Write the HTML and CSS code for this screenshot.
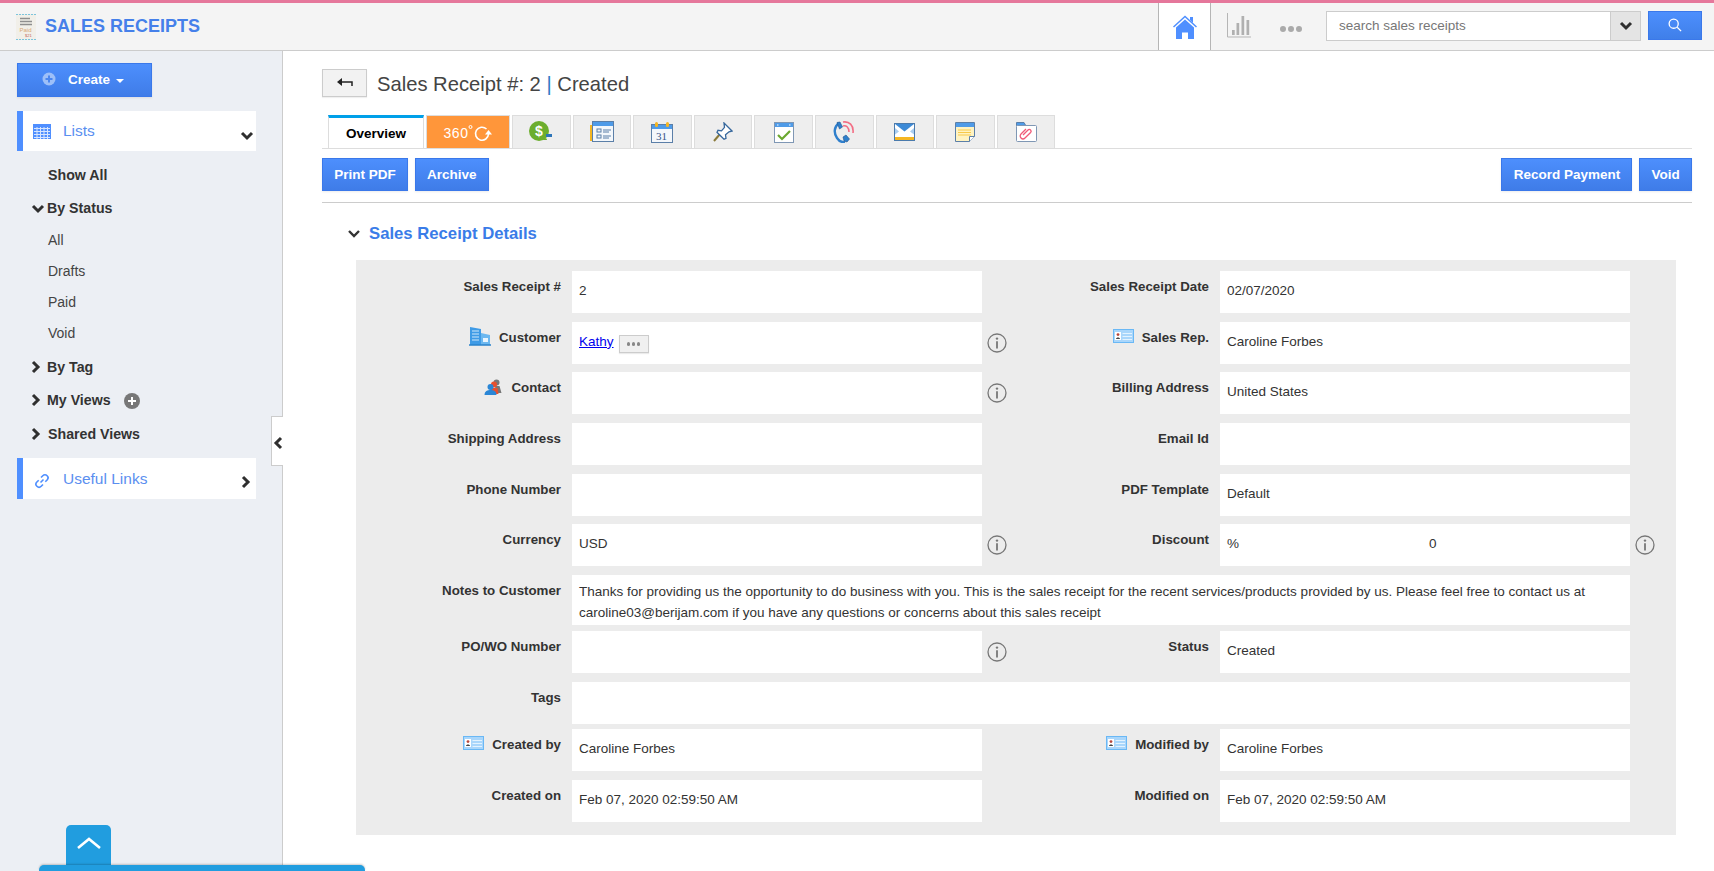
FILE: index.html
```html
<!DOCTYPE html>
<html lang="en">
<head>
<meta charset="utf-8">
<title>Sales Receipts</title>
<link rel="stylesheet" href="styles.css">
</head>
<body>
<svg class="defs" width="0" height="0">
  <symbol id="info" viewBox="0 0 20 20"><circle cx="10" cy="10" r="9" fill="none" stroke="#777" stroke-width="1.3"/><circle cx="10" cy="5.6" r="1.2" fill="#777"/><path d="M10 8.300v7.200" fill="none" stroke="#777" stroke-width="1.800"/></symbol>
  <symbol id="idcard" viewBox="0 0 21 14"><rect x=".5" y=".5" width="20" height="13" fill="#a9d6fb" stroke="#6ab8f5"/><rect x="2" y="3" width="6" height="8" fill="#fff"/><circle cx="5" cy="5.6" r="1.4" fill="#b9463a"/><path d="M3 10c0-2 4-2 4 0z" fill="#444"/><path d="M9.5 4.5h9.5M9.5 7.5h9.5M9.5 10.5h9.5" stroke="#e3f3ff" stroke-width="1"/></symbol>
  <symbol id="chev-r" viewBox="0 0 10 14"><path d="M2 2l5 5-5 5" fill="none" stroke="#2f2f2f" stroke-width="3"/></symbol>
  <symbol id="chev-d" viewBox="0 0 14 10"><path d="M2 2l5 5 5-5" fill="none" stroke="#2f2f2f" stroke-width="3"/></symbol>
</svg>

<header class="topbar">
  <div class="brand">
    <svg class="brand-icon" width="20" height="26" viewBox="0 0 20 26"><rect width="20" height="26" fill="#f1efe9"/><path d="M0 .5h20M0 25.5h20" stroke="#7cc4dc" stroke-dasharray="2 1"/><path d="M4 4.500h10M4 7.500h12M4 10.500h12" stroke="#8f8f8f" stroke-width="1.500"/><text x="3.500" y="17.500" class="paid">Paid</text><text x="9" y="23" class="paid-sub">$21</text></svg>
    <span class="brand-name">SALES RECEIPTS</span>
  </div>
  <nav class="top-nav">
    <a class="home-tab"><svg width="24" height="24" viewBox="0 0 24 24"><path d="M.5 12L12 1.500 23.500 12" fill="none" stroke="#4f8fff" stroke-width="1.500"/><path d="M17 2h3v6l-3-3z" fill="#4f8fff"/><path d="M3 12.500L12 4.500l9 8V24h-6v-6.500H9V24H3z" fill="#4f8fff"/></svg></a>
    <a class="chart-link"><svg width="24" height="25" viewBox="0 0 24 25"><path d="M.5 0v24H24" fill="none" stroke="#b5b5b5"/><path d="M5 17h2.700v5H5zM9.500 10h2.700v12H9.500zM14.500 3h2.700v19h-2.700zM19.500 7h2.700v15h-2.700z" fill="#b0b0b0"/></svg></a>
    <a class="dots"><i></i><i></i><i></i></a>
    <form class="search">
      <div class="search-box">
        <input class="search-input" type="text" placeholder="search sales receipts">
        <span class="search-arrow"><svg width="14" height="10"><use href="#chev-d"/></svg></span>
      </div>
      <button class="search-btn" type="button"><svg width="14" height="14" viewBox="0 0 16 16"><circle cx="6.500" cy="6.500" r="5.200" fill="none" stroke="#fff" stroke-width="1.500"/><path d="M10.500 10.500L15 15" stroke="#fff" stroke-width="1.500"/></svg></button>
    </form>
  </nav>
</header>

<div class="layout">
  <aside class="sidebar">
    <button class="create" type="button">
      <svg width="14" height="14" viewBox="0 0 14 14"><circle cx="7" cy="7" r="6.500" fill="#9dbff8"/><path d="M7 3.500v7M3.500 7h7" stroke="#4a86f0" stroke-width="2"/></svg>
      <span>Create</span><i class="caret"></i>
    </button>
    <div class="panel-head lists-head">
      <svg class="panel-icon" width="18" height="15" viewBox="0 0 18 15"><rect width="18" height="15" fill="#4f8fff"/><path d="M1 4.500h16M1 7.500h16M1 10.500h16M1 13.500h16M4 3v12M7.500 3v12M11 3v12M14.500 3v12" stroke="#d6e5ff" stroke-width="1"/></svg>
      <span class="panel-title">Lists</span>
      <svg class="panel-chev" width="14" height="10"><use href="#chev-d"/></svg>
    </div>
    <ul class="tree">
      <li class="node leaf-top">Show All</li>
      <li class="node by-status"><svg class="tw-d" width="14" height="10"><use href="#chev-d"/></svg>By Status</li>
      <li class="leaf">All</li>
      <li class="leaf">Drafts</li>
      <li class="leaf">Paid</li>
      <li class="leaf">Void</li>
      <li class="node by-tag"><svg class="tw-r" width="10" height="14"><use href="#chev-r"/></svg>By Tag</li>
      <li class="node"><svg class="tw-r" width="10" height="14"><use href="#chev-r"/></svg>My Views<svg class="add" width="16" height="16" viewBox="0 0 16 16"><circle cx="8" cy="8" r="8" fill="#777"/><path d="M8 4v8M4 8h8" stroke="#fff" stroke-width="2"/></svg></li>
      <li class="node shared"><svg class="tw-r" width="10" height="14"><use href="#chev-r"/></svg>Shared Views</li>
    </ul>
    <div class="panel-head links-head">
      <svg class="panel-icon link-icon" width="16" height="16" viewBox="0 0 16 16"><g fill="none" stroke="#4f8fff" stroke-width="1.600"><path d="M6.500 9.500l3-3"/><path d="M7 4.500l1.800-1.800a3 3 0 0 1 4.300 4.300L11.300 8.800"/><path d="M9 11.500l-1.800 1.800a3 3 0 0 1-4.300-4.300L4.700 7.200"/></g></svg>
      <span class="panel-title">Useful Links</span>
      <svg class="panel-chev-r" width="10" height="14"><use href="#chev-r"/></svg>
    </div>
    <span class="collapse"><svg width="10" height="14" viewBox="0 0 10 14"><path d="M8 2L3 7l5 5" fill="none" stroke="#2f2f2f" stroke-width="3"/></svg></span>
  </aside>

  <main class="content">
    <div class="title-row">
      <button class="back" type="button"><svg width="16" height="10" viewBox="0 0 16 10"><path d="M5 0L0 4l5 4z" fill="#222"/><path d="M3 4h12v4" fill="none" stroke="#222" stroke-width="1.500"/></svg></button>
      <h1 class="title">Sales Receipt #: 2 <span class="sep">|</span> Created</h1>
    </div>

    <div class="tabs">
      <a class="tab tab-active">Overview</a>
      <a class="tab tab-360"><span class="t360">360</span><svg width="24" height="18" viewBox="0 0 24 18"><circle cx="2.500" cy="3" r="1.500" fill="none" stroke="#fff"/><path d="M18.500 5A6.500 6.500 0 1 0 20.500 10" fill="none" stroke="#fff" stroke-width="1.600"/><path d="M17 10.500h7l-3.500-4.500z" fill="#fff"/></svg></a>
      <a class="tab"><svg width="24" height="22" viewBox="0 0 24 22"><circle cx="10" cy="10" r="10" fill="#6cae2e"/><text x="6" y="15" class="dollar">$</text><path d="M17 13h6v3h-6z" fill="#2c74b8"/><path d="M14 19a2 2 0 1 1 4 0z" fill="#6cae2e"/></svg></a>
      <a class="tab"><svg width="24" height="22" viewBox="0 0 24 22"><rect x="0" y="4" width="5" height="16" fill="#f5b622"/><rect x="2.500" y=".5" width="21" height="20" fill="#f3f7fb" stroke="#5b7fa8"/><rect x="3" y="1" width="20" height="4" fill="#4f9be8"/><rect x="7" y="8" width="4" height="3" fill="none" stroke="#5b7fa8"/><rect x="7" y="14" width="4" height="3" fill="none" stroke="#5b7fa8"/><path d="M13 9h8M13 11h6M13 15h8M13 17h6" stroke="#5b7fa8"/></svg></a>
      <a class="tab"><svg width="22" height="22" viewBox="0 0 22 22"><rect x=".5" y="3.500" width="21" height="18" fill="#f4f7fb" stroke="#5b7fa8"/><rect x="1" y="4" width="20" height="4" fill="#4f9be8"/><rect x="4" y="1" width="3" height="5" rx="1.500" fill="#f5b622"/><rect x="15" y="1" width="3" height="5" rx="1.500" fill="#f5b622"/><text x="5" y="19" class="cal">31</text></svg></a>
      <a class="tab"><svg width="20" height="20" viewBox="0 0 20 20"><path d="M1 19l6-7" stroke="#8a7a3a" stroke-width="2"/><path d="M11 1l8 8-3 .8-3.500 3 .5 3.500-2 1-7-7 1-2 3.500.5 3-3.500z" fill="#fff" stroke="#36679c" stroke-width="1.300"/></svg></a>
      <a class="tab"><svg width="20" height="21" viewBox="0 0 20 21"><rect x=".5" y=".5" width="19" height="20" fill="#fff" stroke="#7f97b4"/><rect x="1" y="1" width="18" height="4" fill="#4f9be8"/><path d="M3 3h1.500M15 3h1.500" stroke="#fff"/><path d="M4 13l4 4 8-8" fill="none" stroke="#6aa82f" stroke-width="2.200"/></svg></a>
      <a class="tab"><svg width="22" height="22" viewBox="0 0 22 22"><path d="M6 2C1 6 .5 12 4 17c2 3 5 4.500 8 4" fill="none" stroke="#2f7fcc" stroke-width="2.400"/><path d="M4 1.500l3-.5 2.500 5-3 2zM10 16l3-2 3.500 4-2.500 3-3-1z" fill="#2f7fcc" stroke="#24548a" stroke-width=".6"/><path d="M10 5c3-1 6 1 6 6M10 1c6-1 11 3 10 11" fill="none" stroke="#f36d84" stroke-width="1.600"/></svg></a>
      <a class="tab"><svg width="21" height="18" viewBox="0 0 21 18"><rect x=".5" y=".5" width="20" height="17" fill="#fff" stroke="#4b7bad"/><path d="M1 1h19L10.500 8.500z" fill="#3d8ad6"/><path d="M1 5l4 3.500-4 3z M20 5l-4 3.500 4 3z" fill="#a9cdf0"/><path d="M1 14h19v3H1z" fill="#f5b622"/></svg></a>
      <a class="tab"><svg width="20" height="20" viewBox="0 0 20 20"><path d="M.5.500h19v14l-5 5H.5z" fill="#fff3c2" stroke="#5b7fa8"/><rect x="1" y="1" width="18" height="4" fill="#4f9be8"/><path d="M3 8h13M3 10.500h13M3 13h13" stroke="#f7c94a"/><path d="M14.500 19.500v-5h5" fill="#fff" stroke="#5b7fa8"/></svg></a>
      <a class="tab"><svg width="21" height="20" viewBox="0 0 21 20"><path d="M.500 4V.500H8L10 4" fill="#4f9be8" stroke="#5b7fa8"/><rect x=".5" y="3.500" width="20" height="16" rx="1" fill="#fff" stroke="#7f97b4"/><path d="M7 13l5-5a1.800 1.800 0 0 1 2.600 2.500L9 16a2.800 2.800 0 0 1-4-4l5-5" fill="none" stroke="#f05a78" stroke-width="1.300"/></svg></a>
    </div>

    <div class="actions">
      <div class="btn-group">
        <button class="btn" type="button">Print PDF</button>
        <button class="btn" type="button">Archive</button>
      </div>
      <div class="btn-group">
        <button class="btn" type="button">Record Payment</button>
        <button class="btn" type="button">Void</button>
      </div>
    </div>

    <h2 class="section"><svg width="14" height="10" viewBox="0 0 14 10"><path d="M2 2l5 5 5-5" fill="none" stroke="#333" stroke-width="2.400"/></svg>Sales Receipt Details</h2>

    <section class="details">
      <div class="row">
        <div class="lbl">Sales Receipt #</div><div class="val">2</div><span class="slot"></span>
        <div class="lbl">Sales Receipt Date</div><div class="val">02/07/2020</div>
      </div>
      <div class="row">
        <div class="lbl"><svg class="lbl-icon tall" width="22" height="20" viewBox="0 0 22 20"><path d="M1 1l11 2v16H1z" fill="#3f9be6"/><path d="M3 5h7M3 8h7M3 11h7M3 14h7" stroke="#cfe8fb"/><path d="M12 7l9 2v10h-9z" fill="#6cb8f0"/><path d="M14 12h5v4h-5z" fill="#e8f5ff"/><path d="M0 19h22" stroke="#2a83cc" stroke-width="1.500"/></svg><span>Customer</span></div>
        <div class="val"><a class="link" href="#">Kathy</a><button class="more" type="button"><i></i><i></i><i></i></button></div>
        <span class="slot"><svg width="20" height="20"><use href="#info"/></svg></span>
        <div class="lbl"><svg class="lbl-icon" width="21" height="14"><use href="#idcard"/></svg><span>Sales Rep.</span></div><div class="val">Caroline Forbes</div>
      </div>
      <div class="row">
        <div class="lbl"><svg class="lbl-icon contact-icon" width="18" height="17" viewBox="0 0 17 17"><circle cx="12" cy="3.500" r="3" fill="#777"/><path d="M10 7l5 0 2 7h-4z" fill="#777"/><circle cx="9.500" cy="5.500" r="3" fill="#e8502e"/><path d="M6 9h7l1 6H7z" fill="#e8502e"/><circle cx="6" cy="8" r="3" fill="#2a86d6"/><path d="M0 16c0-4 3-5 6-5s6 1 6 5z" fill="#2a86d6"/></svg><span>Contact</span></div>
        <div class="val"></div>
        <span class="slot"><svg width="20" height="20"><use href="#info"/></svg></span>
        <div class="lbl">Billing Address</div><div class="val">United States</div>
      </div>
      <div class="row">
        <div class="lbl">Shipping Address</div><div class="val"></div><span class="slot"></span>
        <div class="lbl">Email Id</div><div class="val"></div>
      </div>
      <div class="row">
        <div class="lbl">Phone Number</div><div class="val"></div><span class="slot"></span>
        <div class="lbl">PDF Template</div><div class="val">Default</div>
      </div>
      <div class="row">
        <div class="lbl">Currency</div><div class="val">USD</div>
        <span class="slot"><svg width="20" height="20"><use href="#info"/></svg></span>
        <div class="lbl">Discount</div><div class="val"><span class="pct">%</span>0</div>
        <span class="slot"><svg width="20" height="20"><use href="#info"/></svg></span>
      </div>
      <div class="row row-notes">
        <div class="lbl">Notes to Customer</div>
        <div class="val val-wide val-notes">Thanks for providing us the opportunity to do business with you. This is the sales receipt for the recent services/products provided by us. Please feel free to contact us at caroline03@berijam.com if you have any questions or concerns about this sales receipt</div>
      </div>
      <div class="row">
        <div class="lbl">PO/WO Number</div><div class="val"></div>
        <span class="slot"><svg width="20" height="20"><use href="#info"/></svg></span>
        <div class="lbl">Status</div><div class="val">Created</div>
      </div>
      <div class="row row-tags">
        <div class="lbl">Tags</div><div class="val val-wide"></div>
      </div>
      <div class="row">
        <div class="lbl"><svg class="lbl-icon" width="21" height="14"><use href="#idcard"/></svg><span>Created by</span></div><div class="val">Caroline Forbes</div><span class="slot"></span>
        <div class="lbl"><svg class="lbl-icon" width="21" height="14"><use href="#idcard"/></svg><span>Modified by</span></div><div class="val">Caroline Forbes</div>
      </div>
      <div class="row row-last">
        <div class="lbl">Created on</div><div class="val">Feb 07, 2020 02:59:50 AM</div><span class="slot"></span>
        <div class="lbl">Modified on</div><div class="val">Feb 07, 2020 02:59:50 AM</div>
      </div>
    </section>
  </main>
</div>

<div class="dock">
  <span class="dock-tab"><svg width="26" height="14" viewBox="0 0 26 14"><path d="M2 12L13 3l11 9" fill="none" stroke="#fff" stroke-width="2.600"/></svg></span>
  <div class="dock-bar"></div>
</div>
</body>
</html>
```

FILE: styles.css
```css
* { box-sizing: border-box; }
html, body { margin: 0; padding: 0; height: 100%; overflow: hidden; }
body { font-family: "Liberation Sans", Arial, sans-serif; font-size: 13.500px; color: #333; background: #fff; position: relative; }
.defs { position: absolute; }
ul { list-style: none; margin: 0; padding: 0; }
button { font-family: inherit; cursor: pointer; }

/* top bar */
.topbar { height: 51px; border-top: 3px solid #e5779b; border-bottom: 1px solid #ccc; background: #f4f4f4; display: flex; justify-content: space-between; }
.brand { display: flex; align-items: center; padding-left: 16px; }
.brand-icon { margin-right: 9px; margin-top: 1px; }
.paid { font: 6px "Liberation Sans", sans-serif; fill: #d8a878; }
.paid-sub { font: 4px "Liberation Sans", sans-serif; fill: #c0605a; }
.brand-name { font-size: 18px; font-weight: 700; color: #4580ea; }
.top-nav { display: flex; align-items: stretch; }
.home-tab { width: 53px; background: #fff; border-left: 1px solid #b5b5b5; border-right: 1px solid #b5b5b5; display: flex; align-items: center; justify-content: center; }
.chart-link { width: 56px; display: flex; align-items: center; justify-content: center; padding-bottom: 3px; }
.dots { width: 59px; display: flex; align-items: center; gap: 2px; padding-left: 13px; padding-top: 4px; }
.dots i { width: 6px; height: 6px; border-radius: 50%; background: #aaa; }
.search { display: flex; align-items: flex-start; gap: 7px; padding: 8px 12px 0 0; }
.search-box { width: 315px; height: 30px; border: 1px solid #ccc; background: #fff; display: flex; }
.search-input { flex: 1; min-width: 0; border: 0; outline: 0; padding: 0 11px 2px 12px; background: transparent; font: 13.500px "Liberation Sans", sans-serif; color: #555; }
.search-input::placeholder { color: #777; opacity: 1; }
.search-arrow { width: 30px; background: #e4e4e4; border-left: 1px solid #ccc; display: flex; align-items: center; justify-content: center; }
.search-btn { width: 54px; height: 29px; padding: 0 0 2px; border: 1px solid #3a78ea; background: linear-gradient(#4d8ffd, #3f7fe9); display: flex; align-items: center; justify-content: center; }

/* layout */
.layout { display: flex; height: calc(100% - 51px); }
.sidebar { width: 283px; flex: none; background: #eceff4; border-right: 1px solid #ccc; padding: 12px 26px 0 17px; position: relative; }
.create { width: 135px; height: 34px; padding: 0 0 0 24px; border: 1px solid #3a78ea; background: linear-gradient(#4d8ffd, #3f7ce8); color: #fff; font-size: 13.500px; font-weight: 700; display: flex; align-items: center; box-shadow: 0 1px 2px rgba(0,0,0,.08); }
.create span { margin-left: 12px; margin-top: -1px; }
.caret { margin-left: 6px; margin-top: 1px; border-left: 4px solid transparent; border-right: 4px solid transparent; border-top: 4px solid #fff; }
.create svg { margin-top: -2px; }
.panel-head { width: 239px; background: #fff; border-left: 6px solid #4f8fff; display: flex; align-items: center; position: relative; }
.lists-head { height: 40px; margin-top: 14px; padding-bottom: 1px; }
.links-head { height: 41px; margin-top: 8px; padding-top: 1px; }
.panel-icon { position: absolute; left: 10px; top: 13px; }
.link-icon { top: 15px; left: 11px; }
.panel-title { margin-left: 40px; font-size: 15.500px; color: #5b8ff0; }
.panel-chev { position: absolute; right: 2px; top: 20px; }
.panel-chev-r { position: absolute; right: 5px; top: 17px; }
.tree { padding-top: 8px; }
.node { height: 32px; line-height: 32px; font-size: 14.200px; font-weight: 700; color: #333; position: relative; padding-left: 30px; }
.leaf-top { padding-left: 31px; height: 33px; }
.by-status { height: 33px; }
.leaf { height: 31px; line-height: 31px; padding-left: 31px; font-size: 14px; color: #444; }
.tw-d { position: absolute; left: 14px; top: 12px; }
.tw-r { position: absolute; left: 14px; top: 9px; }
.by-tag { margin-top: 2px; height: 33px; }
.shared { margin-top: 2px; padding-left: 31px; }
.add { vertical-align: -4px; margin-left: 13px; }
.collapse { position: absolute; right: -1px; top: 365px; width: 12px; height: 50px; padding-top: 3px; background: #fff; border: 1px solid #ccc; border-right: 0; display: flex; align-items: center; justify-content: center; }

/* main */
.content { flex: 1; min-width: 0; padding: 18px 22px 0 39px; }
.title-row { display: flex; align-items: center; height: 28px; }
.back { width: 45px; height: 28px; padding: 0; background: #f2f2f2; border: 1px solid #ccc; display: flex; align-items: center; justify-content: center; box-shadow: 0 1px 1px rgba(0,0,0,.06); }
.title { margin: 2px 0 0 10px; font-size: 20.200px; font-weight: 400; color: #444; }
.sep { color: #2f78c4; }
.tabs { display: flex; gap: 2px; margin-top: 18px; padding-left: 6px; height: 34px; border-bottom: 1px solid #ddd; }
.tab { width: 58.600px; height: 33px; background: #eee; border: 1px solid #ddd; border-bottom: 0; display: flex; align-items: center; justify-content: center; }
.tab-active { width: 96px; background: #fff; border-top: 3px solid #00a0e9; color: #000; font-size: 13.500px; font-weight: 700; }
.tab-360 { width: 84px; background: #ff963a; color: #fff; padding-top: 2px; }
.t360 { font-size: 14px; letter-spacing: .5px; }
.dollar { font: 700 14px "Liberation Sans", sans-serif; fill: #fff; }
.cal { font: 11px "Liberation Serif", serif; fill: #36548a; }
.actions { display: flex; justify-content: space-between; margin-top: 9px; padding-bottom: 11px; border-bottom: 1px solid #ccc; }
.btn-group { display: flex; gap: 7px; }
.btn { height: 33px; padding: 0 11.200px; border: 1px solid #3a78ea; background: linear-gradient(#4d8ffd, #3f7ce8); color: #fff; font-size: 13.500px; font-weight: 700; box-shadow: 0 1px 2px rgba(0,0,0,.08); }
.section { margin: 0; height: 57px; padding: 4px 0 0 25px; display: flex; align-items: center; gap: 8px; font-size: 16.700px; font-weight: 700; color: #3a7ce8; }

/* details grid */
.details { margin: 0 16px 0 34px; padding: 11px 0 13px; background: #ececec; }
.row { display: grid; grid-template-columns: 216px 410px 32px 206px 410px 32px; margin-bottom: 8.700px; }
.row-notes { margin-bottom: 6px; }
.row-tags { margin-bottom: 5px; }
.row-last { margin-bottom: 0; }
.lbl { display: flex; justify-content: flex-end; align-items: flex-start; gap: 8px; padding: 8px 11px 0 0; line-height: 16px; font-size: 13.300px; font-weight: 700; color: #333; }
.lbl-icon { flex: none; margin-top: -1px; }
.lbl-icon.tall { margin-top: -4px; }
.lbl-icon.contact-icon { margin-right: 2px; margin-left: -1px; }
.val { min-height: 42px; background: #fff; padding: 11px 7px 0; line-height: 18px; color: #333; }
.val-wide { grid-column: 2 / 6; }
.val-notes { min-height: 50px; padding-top: 7px; line-height: 20.500px; }
.slot { display: flex; align-items: center; justify-content: center; padding-right: 2px; }
.link { color: #0000ee; }
.pct { display: inline-block; width: 202px; }
.more { width: 30px; height: 18px; margin-left: 5px; padding: 0; background: #f0f0f0; border: 1px solid #ccc; vertical-align: 0; display: inline-flex; align-items: center; justify-content: center; gap: 1.500px; box-shadow: 0 1px 1px rgba(0,0,0,.08); }
.more i { width: 3.500px; height: 3.500px; border-radius: 50%; background: #888; }

/* bottom dock, overlay */
.dock { position: absolute; left: 39px; bottom: 0; width: 326px; }
.dock-tab { display: flex; width: 45px; height: 40px; margin-left: 27px; border-radius: 5px 5px 0 0; background: #219ddf; align-items: center; justify-content: center; padding-bottom: 4px; }
.dock-bar { height: 6px; background: #219ddf; border-radius: 5px 5px 0 0; box-shadow: 0 -1px 2px rgba(0,0,0,.2); }
```
